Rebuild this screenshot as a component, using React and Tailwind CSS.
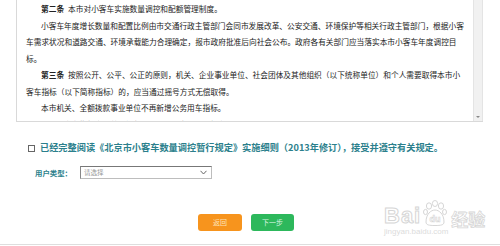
import React from 'react';

const FONT = { fontFamily: '"Noto Sans CJK SC", "Noto Sans", sans-serif' };

// 条款正文（按参考图逐行排版）
const clauses = [
  { indent: true, head: '第二条', text: '本市对小客车实施数量调控和配额管理制度。' },
  { indent: true, text: '小客车年度增长数量和配置比例由市交通行政主管部门会同市发展改革、公安交通、环境保护等相关行政主管部门，根据小客' },
  { text: '车需求状况和道路交通、环境承载能力合理确定，报市政府批准后向社会公布。政府各有关部门应当落实本市小客车年度调控目' },
  { text: '标。' },
  { indent: true, head: '第三条', text: '按照公开、公平、公正的原则，机关、企业事业单位、社会团体及其他组织（以下统称单位）和个人需要取得本市小' },
  { text: '客车指标（以下简称指标）的，应当通过摇号方式无偿取得。' },
  { indent: true, text: '本市机关、全额拨款事业单位不再新增公务用车指标。' },
  { indent: true, text: '其他小客车指标实行总量控制，具体配置办法另行规定。' },
];

function Watermark() {
  return (
    <div className="pointer-events-none absolute left-[384px] top-[200px] flex flex-col items-start select-none">
      <div className="flex items-end gap-[2px] leading-none">
        <span className="text-[22px] font-bold tracking-[1px] text-white [-webkit-text-stroke:1px_#d6d6d6]" style={{ fontFamily: '"Liberation Sans", sans-serif' }}>
          Bai
        </span>
        <svg width="24" height="26" viewBox="0 0 24 26" className="mb-[1px]">
          <g fill="#fff" stroke="#d6d6d6" strokeWidth="1">
            <ellipse cx="6" cy="6" rx="2.6" ry="3.2" />
            <ellipse cx="12" cy="3.5" rx="2.6" ry="3" />
            <ellipse cx="18" cy="6" rx="2.6" ry="3.2" />
            <ellipse cx="2.5" cy="12" rx="2" ry="2.6" />
            <ellipse cx="21.5" cy="12" rx="2" ry="2.6" />
            <path d="M3 22 C3 14 8 10 12 10 C16 10 21 14 21 22 C21 25 18 25.5 12 25.5 C6 25.5 3 25 3 22 Z" />
          </g>
          <text x="12" y="22" textAnchor="middle" fontSize="9" fontWeight="bold" fill="#fff" stroke="#d6d6d6" strokeWidth="0.6" fontFamily="Liberation Sans, sans-serif">du</text>
        </svg>
        <span className="ml-[2px] text-[17px] font-bold text-white [-webkit-text-stroke:0.8px_#d6d6d6]" style={FONT}>
          经验
        </span>
      </div>
      <span className="mt-[1px] text-[8px] leading-none text-[#dcdcdc]" style={{ fontFamily: '"Liberation Sans", sans-serif' }}>
        jingyan.baidu.com
      </span>
    </div>
  );
}

export default function App() {
  return (
    <div className="relative h-[246px] w-[500px] overflow-hidden bg-white" style={FONT}>

      {/* 条款滚动框 */}
      <div className="ml-4 flex h-[122px] w-[467px] border-b border-l border-[#d9d9d9]">
        <div className="flex-1 overflow-hidden pl-[9px] pt-[1px] text-[7.7px] leading-[16.5px] text-[#222]">
          {clauses.map((line, i) => (
            <div key={i} className={`whitespace-nowrap ${line.indent ? 'pl-[15px]' : ''}`}>
              {line.head && <span className="mr-[4px] font-bold">{line.head}</span>}
              {line.text}
            </div>
          ))}
        </div>
        <div className="flex w-[10px] flex-col justify-end border-l border-r border-[#e4e4e4] bg-[#f1f1f1] pb-[3px]">
          <div className="mx-auto h-0 w-0 border-l-[2px] border-r-[2px] border-t-[2px] border-l-transparent border-r-transparent border-t-[#888]" />
        </div>
      </div>

      {/* 同意条款 */}
      <div className="mt-[19px] flex h-[14px] items-center pl-[28px]">
        <div className="h-[7px] w-[7px] border border-[#666] bg-white" />
        <span className="ml-[5px] whitespace-nowrap text-[9.2px] font-bold text-[#2b7f8c]">
          已经完整阅读《北京市小客车数量调控暂行规定》实施细则（2013年修订），接受并遵守有关规定。
        </span>
      </div>

      {/* 用户类型 */}
      <div className="mt-[11px] flex h-[13px] items-center pl-[35px]">
        <span className="w-[45px] whitespace-nowrap text-[7.4px] font-bold text-[#2b7f8c]">用户类型：</span>
        <div className="flex h-[13px] w-[132px] items-center justify-between border border-[#bdbdbd] border-l-[#888] border-t-[#777] bg-white pl-[3px] pr-[4px]">
          <span className="text-[6.5px] text-[#999]">请选择</span>
          <svg width="7" height="5" viewBox="0 0 7 5">
            <path d="M0.5 0.8 L3.5 4 L6.5 0.8" fill="none" stroke="#666" strokeWidth="1" />
          </svg>
        </div>
      </div>

      {/* 按钮 */}
      <div className="mt-[35px] flex h-[17px] gap-[9px] pl-[198px]">
        <button className="h-[17px] w-[44px] rounded-[3px] bg-[#f7941d] text-[7px] text-[#fde3b8]">返回</button>
        <button className="h-[17px] w-[43px] rounded-[3px] bg-[#2db85c] text-[7px] text-[#d9f5e2]">下一步</button>
      </div>

      <div className="mt-[13px] h-px w-full bg-[#dedede]" />

      <Watermark />
    </div>
  );
}
